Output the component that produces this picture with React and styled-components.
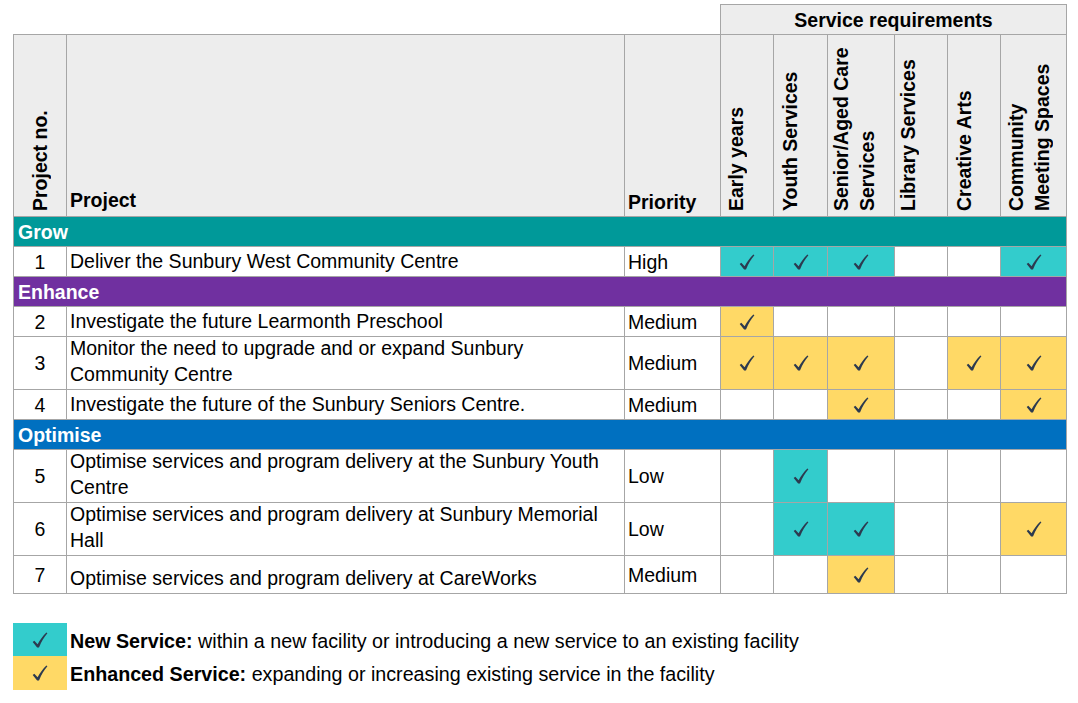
import React from "react";
import styled, { createGlobalStyle } from "styled-components";

const GlobalStyle = createGlobalStyle`
  html, body { margin: 0; padding: 0; background: #ffffff; }
  body {
    font-family: "Liberation Sans", Arial, Helvetica, sans-serif;
    font-size: 19.5px;
    color: #000;
  }
`;

const COLS = "52px 557px 95px 52px 53px 66px 52px 52px 65px";
const GRID = "#a6a6a6";
const HEAD_BG = "#ededed";
const NEW = "#33cccc";
const ENH = "#ffd966";

const Page = styled.div`
  padding: 4px 0 0 13px;
  width: 1054px;
`;

const GroupRow = styled.div`
  display: flex;
  justify-content: flex-end;
`;

const GroupHeader = styled.div`
  width: 345px;
  height: 28px;
  border: 1px solid ${GRID};
  border-bottom: none;
  background: ${HEAD_BG};
  font-weight: bold;
  display: flex;
  align-items: center;
  justify-content: center;
  padding-top: 1px;
  box-sizing: content-box;
`;

const Table = styled.div`
  display: flex;
  flex-direction: column;
  gap: 1px;
  padding: 1px;
  background: ${GRID};
`;

const Row = styled.div`
  display: grid;
  grid-template-columns: ${COLS};
  grid-template-rows: ${(p) => p.$h}px;
  gap: 1px;
  height: ${(p) => p.$h}px;
  overflow: hidden;
`;

const HeadCell = styled.div`
  background: ${HEAD_BG};
  font-weight: bold;
  box-sizing: border-box;
  height: 181px;
  display: flex;
  align-items: flex-end;
  justify-content: ${(p) => (p.$center ? "center" : "flex-start")};
  padding: 4px 3px ${(p) => p.$pb ?? 2}px ${(p) => p.$pad ?? 3}px;
  line-height: 26px;
  overflow: hidden;
`;

const VHeadCell = styled(HeadCell)`
  align-items: flex-start;
  padding: 4px 0 5px ${(p) => p.$pad ?? 4}px;
`;

const VLabel = styled.div`
  writing-mode: vertical-rl;
  transform: rotate(180deg);
  text-align: start;
  height: 172px;
  line-height: 26px;
`;

const Band = styled.div`
  height: 29px;
  background: ${(p) => p.$color};
  color: #ffffff;
  font-weight: bold;
  display: flex;
  align-items: center;
  padding: 1px 4px 0;
  box-sizing: border-box;
`;

const Cell = styled.div`
  background: ${(p) => p.$bg || "#ffffff"};
  display: flex;
  align-items: ${(p) => (p.$bottom ? "flex-end" : "center")};
  justify-content: ${(p) => (p.$center ? "center" : "flex-start")};
  padding: 0 3px ${(p) => (p.$bottom ? 2 : 0)}px;
  line-height: 26px;
  box-sizing: border-box;
  min-height: 0;
`;

const Legend = styled.div`
  margin-top: 29px;
  display: flex;
  flex-direction: column;
`;

const LegendRow = styled.div`
  display: flex;
  align-items: center;
  gap: 3px;
`;

const Swatch = styled.div`
  width: 54px;
  height: ${(p) => p.$h}px;
  background: ${(p) => p.$bg};
  display: flex;
  align-items: center;
  justify-content: center;
`;

const LegendText = styled.div`
  line-height: 26px;
  font-size: 19.7px;
  padding-top: 2px;
`;

const Check = () => (
  <svg width="16" height="16" viewBox="0 0 16 16" aria-hidden="true">
    <path
      d="M0.7 10.1 L2.3 8.7 L5.6 12.3 C8 7.8 11 3.6 14.4 0.4 L15.4 1.2 C12.2 4.8 9.4 9.6 7 15.4 L5.1 15.6 Z"
      fill="#2c3a4f"
    />
  </svg>
);

const services = [
  { label: "Early years", pad: 2 },
  { label: "Youth Services", pad: 3 },
  { label: "Senior/Aged Care Services", pad: 0 },
  { label: "Library Services", pad: 0 },
  { label: "Creative Arts", pad: 3 },
  { label: "Community Meeting Spaces", pad: 2 },
];

const rows = [
  { band: "Grow", color: "#009999" },
  {
    no: 1,
    text: "Deliver the Sunbury West Community Centre",
    priority: "High",
    h: 29,
    s: ["n", "n", "n", "", "", "n"],
  },
  { band: "Enhance", color: "#7030a0" },
  {
    no: 2,
    text: "Investigate the future Learmonth Preschool",
    priority: "Medium",
    h: 29,
    s: ["e", "", "", "", "", ""],
  },
  {
    no: 3,
    text: "Monitor the need to upgrade and or expand Sunbury Community Centre",
    priority: "Medium",
    h: 52,
    s: ["e", "e", "e", "", "e", "e"],
  },
  {
    no: 4,
    text: "Investigate the future of the Sunbury Seniors Centre.",
    priority: "Medium",
    h: 29,
    s: ["", "", "e", "", "", "e"],
  },
  { band: "Optimise", color: "#0070c0" },
  {
    no: 5,
    text: "Optimise services and program delivery at the Sunbury Youth Centre",
    priority: "Low",
    h: 52,
    s: ["", "n", "", "", "", ""],
  },
  {
    no: 6,
    text: "Optimise services and program delivery at Sunbury Memorial Hall",
    priority: "Low",
    h: 52,
    s: ["", "n", "n", "", "", "e"],
  },
  {
    no: 7,
    text: "Optimise services and program delivery at CareWorks",
    priority: "Medium",
    h: 37,
    s: ["", "", "e", "", "", ""],
  },
];

const fill = { n: NEW, e: ENH };

export default function App() {
  return (
    <>
      <GlobalStyle />
      <Page>
        <GroupRow>
          <GroupHeader>Service requirements</GroupHeader>
        </GroupRow>
        <Table>
          <Row $h={181}>
            <VHeadCell $center $pad={0}>
              <VLabel>Project no.</VLabel>
            </VHeadCell>
            <HeadCell $pb={3}>Project</HeadCell>
            <HeadCell $pb={1}>Priority</HeadCell>
            {services.map((s) => (
              <VHeadCell key={s.label} $pad={s.pad}>
                <VLabel>{s.label}</VLabel>
              </VHeadCell>
            ))}
          </Row>
          {rows.map((r, i) =>
            r.band ? (
              <Band key={i} $color={r.color}>
                {r.band}
              </Band>
            ) : (
              <Row key={i} $h={r.h}>
                <Cell $center>{r.no}</Cell>
                <Cell $bottom>{r.text}</Cell>
                <Cell>{r.priority}</Cell>
                {r.s.map((v, j) => (
                  <Cell key={j} $center $bg={fill[v]}>
                    {v && <Check />}
                  </Cell>
                ))}
              </Row>
            )
          )}
        </Table>
        <Legend>
          <LegendRow>
            <Swatch $bg={NEW} $h={33}>
              <Check />
            </Swatch>
            <LegendText>
              <b>New Service:</b> within a new facility or introducing a new
              service to an existing facility
            </LegendText>
          </LegendRow>
          <LegendRow>
            <Swatch $bg={ENH} $h={34}>
              <Check />
            </Swatch>
            <LegendText>
              <b>Enhanced Service:</b> expanding or increasing existing service
              in the facility
            </LegendText>
          </LegendRow>
        </Legend>
      </Page>
    </>
  );
}
